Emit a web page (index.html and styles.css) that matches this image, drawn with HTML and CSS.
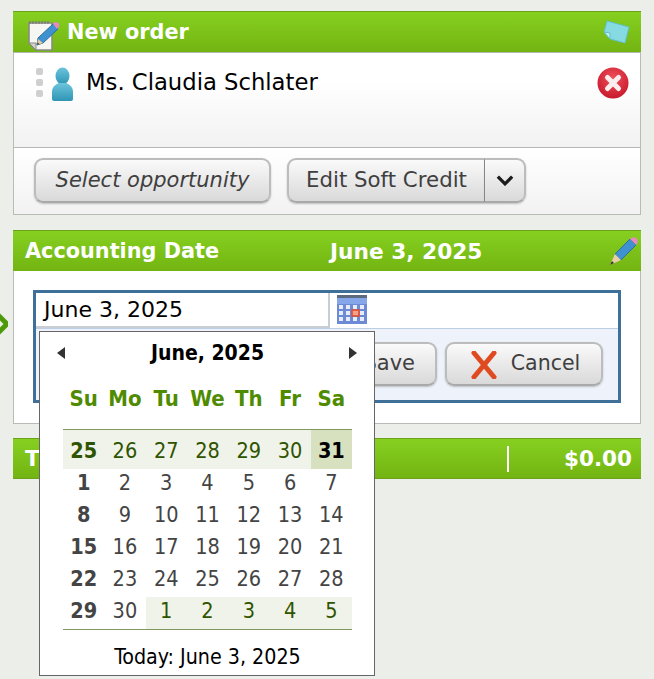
FILE: index.html
```html
<!DOCTYPE html>
<html lang="en">
<head>
<meta charset="utf-8">
<title>New order</title>
<link rel="stylesheet" href="styles.css">
</head>
<body>
<svg class="side-marker" width="8" height="26" viewBox="0 0 8 26"><path d="M-3 3 7 13-3 23" fill="none" stroke="#4c9a0a" stroke-width="5"/></svg>

<section class="panel panel-order">
  <header class="bar">
    <svg class="ico ico-note" width="34" height="34" viewBox="0 0 34 34">
      <path d="M3 6H26V33H10L3 26Z" fill="#f6f6f2" stroke="#8b8b86" stroke-width="1.6"/>
      <path d="M3 26H10V33Z" fill="#d2d2cc" stroke="#8b8b86"/>
      <path d="M4 4V7M7 4V7M10 4V7M13 4V7M16 4V7M19 4V7M22 4V7" stroke="#777" stroke-width="1.2"/>
      <path d="M12 21 27 7 32 12 17 26 11 28Z" fill="#3f92cf" stroke="#2a6f9f"/>
      <path d="M27 7 29 5 33 6 33 10 31 12Z" fill="#e48bc0"/>
      <path d="M12 22 11 28 17 26Z" fill="#e6c9a0"/>
      <path d="M11.500 25.500 11 28 13.500 27Z" fill="#333"/>
    </svg>
    <h2 class="bar-title">New order</h2>
    <svg class="ico ico-sticky" width="28" height="26" viewBox="0 0 28 26">
      <path d="M5 2 27 8 23 24 8 20 2 13Z" fill="#86dbe2" stroke="#5fbfc9"/>
      <path d="M2 13 8 14 8 20Z" fill="#c7eef0" stroke="#5fbfc9"/>
    </svg>
  </header>
  <div class="contact-row">
    <div class="grip"><i></i><i></i><i></i></div>
    <svg class="ico ico-person" width="23" height="34" viewBox="0 0 23 34">
      <defs><linearGradient id="pg" x1="0" y1="0" x2="0" y2="1"><stop offset="0" stop-color="#6cc4dc"/><stop offset="1" stop-color="#2f95b5"/></linearGradient></defs>
      <ellipse cx="11.500" cy="9" rx="7" ry="8.500" fill="url(#pg)"/>
      <path d="M8 16H15C20 18 22 21 22 25V32Q22 34 20 34H3Q1 34 1 32V25C1 21 3 18 8 16Z" fill="url(#pg)"/>
    </svg>
    <span class="contact-name">Ms. Claudia Schlater</span>
    <svg class="ico ico-remove" width="32" height="32" viewBox="0 0 32 32">
      <defs><radialGradient id="rg" cx=".5" cy=".35" r=".7"><stop offset="0" stop-color="#f0505a"/><stop offset="1" stop-color="#c4152a"/></radialGradient></defs>
      <circle cx="16" cy="16" r="15.500" fill="url(#rg)"/>
      <path d="M10.500 10.500 21.500 21.500M21.500 10.500 10.500 21.500" stroke="#fbeeee" stroke-width="5" stroke-linecap="round"/>
    </svg>
  </div>
  <div class="actions">
    <button class="btn btn-italic">Select opportunity</button>
    <div class="btn-split">
      <button class="btn btn-main">Edit Soft Credit</button>
      <button class="btn btn-caret"><svg width="18" height="11" viewBox="0 0 16 10"><path d="M1.500 1.500 8 8 14.500 1.500" fill="none" stroke="#1c1c1c" stroke-width="3"/></svg></button>
    </div>
  </div>
</section>

<section class="panel panel-date">
  <header class="bar bar-date">
    <h2 class="bar-title bar-title-sm">Accounting Date</h2>
    <span class="bar-value">June 3, 2025</span>
    <svg class="ico ico-pencil" width="30" height="30" viewBox="0 0 30 30">
      <path d="M7 18 22 3 28 9 13 24Z" fill="#3f92cf" stroke="#2a6f9f"/>
      <path d="M22 3 24 1.500Q27 .5 29 3T28 9Z" fill="#e48bc0"/>
      <path d="M7 18 13 24 2 29Z" fill="#e9cfa8"/>
      <path d="M4 25 6 27 2 29Z" fill="#333"/>
    </svg>
  </header>
  <div class="date-body">
    <div class="editor">
      <div class="editor-input">
        <div class="date-field">June 3, 2025</div>
        <svg class="ico ico-cal" width="30" height="29" viewBox="0 0 30 29">
          <rect width="30" height="29" fill="#6d8ad6"/>
          <rect width="30" height="3" fill="#5c6a80"/>
          <rect y="3" width="30" height="6" fill="#86a6ea"/>
          <g fill="#e6edf9">
            <rect x="2" y="10" width="4" height="4"/><rect x="9" y="10" width="4" height="4"/><rect x="16" y="10" width="4" height="4"/><rect x="23" y="10" width="4" height="4"/>
            <rect x="2" y="16" width="4" height="4"/><rect x="9" y="16" width="4" height="4"/><rect x="23" y="16" width="4" height="4"/>
            <rect x="2" y="22" width="4" height="4"/><rect x="9" y="22" width="4" height="4"/><rect x="16" y="22" width="4" height="4"/><rect x="23" y="22" width="4" height="4"/>
          </g>
          <rect x="15" y="15" width="7" height="6" fill="#f3a08a" stroke="#e2492a" stroke-width="1.500"/>
        </svg>
      </div>
      <div class="editor-actions">
        <button class="btn btn-save">Save</button>
        <button class="btn btn-cancel">
          <svg class="ico" width="26" height="28" viewBox="0 0 26 28"><path d="M3 2 23 26M23 2 3 26" stroke="#e04a20" stroke-width="5" stroke-linecap="round"/></svg>
          <span>Cancel</span>
        </button>
      </div>
    </div>
  </div>
</section>

<section class="panel-total">
  <span class="total-label">T</span>
  <span class="total-value">$0.00</span>
</section>

<div class="calendar">
  <div class="cal-head">
    <span class="cal-prev"></span>
    <span class="cal-title">June, 2025</span>
    <span class="cal-next"></span>
  </div>
  <div class="cal-grid cal-dow">
    <span>Su</span><span>Mo</span><span>Tu</span><span>We</span><span>Th</span><span>Fr</span><span>Sa</span>
  </div>
  <div class="cal-days">
    <div class="cal-grid cal-row-first">
      <span class="out sun">25</span><span class="out">26</span><span class="out">27</span><span class="out">28</span><span class="out">29</span><span class="out">30</span><span class="sel">31</span>
    </div>
    <div class="cal-grid cal-row"><span class="sun">1</span><span>2</span><span>3</span><span>4</span><span>5</span><span>6</span><span>7</span></div>
    <div class="cal-grid cal-row"><span class="sun">8</span><span>9</span><span>10</span><span>11</span><span>12</span><span>13</span><span>14</span></div>
    <div class="cal-grid cal-row"><span class="sun">15</span><span>16</span><span>17</span><span>18</span><span>19</span><span>20</span><span>21</span></div>
    <div class="cal-grid cal-row"><span class="sun">22</span><span>23</span><span>24</span><span>25</span><span>26</span><span>27</span><span>28</span></div>
    <div class="cal-grid cal-row"><span class="sun">29</span><span>30</span><span class="out">1</span><span class="out">2</span><span class="out">3</span><span class="out">4</span><span class="out">5</span></div>
  </div>
  <div class="cal-today">Today: June 3, 2025</div>
</div>
</body>
</html>
```
FILE: styles.css
```css
* { box-sizing: border-box; }
html, body { margin: 0; height: 100%; }
body {
  position: relative;
  background: #ecefe9;
  padding: 11px 13px 0;
  font-family: "DejaVu Sans", Verdana, sans-serif;
  overflow: hidden;
}
.ico { filter: blur(.4px); }
.side-marker { position: absolute; left: 0; top: 311px; }
.panel {
  background: #fff;
  border: 1px solid #b9bcb6;
  border-top: 0;
}
.panel-order { height: 204px; display: flex; flex-direction: column; margin-bottom: 15px; }
.panel-date { height: 194px; margin-bottom: 14px; }
.bar {
  height: 42px;
  margin: 0 -1px;
  display: flex;
  align-items: center;
  background: linear-gradient(#86d020, #73b412);
  border-top: 1px solid #6ca21a;
  border-bottom: 1px solid #b4b8b0;
  color: #fff;
  padding: 0 11px 0 13px;
}
.bar-title { margin: 0; font-size: 20.8px; font-weight: 700; line-height: 1; }
.ico-note { margin: 4px 7px 0 0; }
.ico-sticky { margin-left: auto; }
.contact-row {
  flex: 0 0 95px;
  display: flex;
  align-items: flex-start;
  padding: 14px 11px 0 22px;
  background: linear-gradient(#fff 30%, #f2f2f2);
  border-bottom: 1px solid #b5b8b2;
}
.grip { width: 15px; display: flex; flex-direction: column; gap: 4px; margin-top: 1px; }
.grip i { width: 7px; height: 7px; border-radius: 2px; background: #cfcfcf; }
.ico-person { margin-right: 12px; }
.contact-name { font-size: 22.7px; line-height: 30px; color: #000; }
.ico-remove { margin-left: auto; }
.actions {
  flex: 1;
  display: flex;
  gap: 16px;
  padding: 10px 20px 0;
  background: linear-gradient(#fff, #f2f2f2);
}
.btn {
  font: inherit;
  font-size: 21px;
  color: #3f3f3f;
  height: 45px;
  padding: 0 0 2px;
  border: 2px solid #bcbcbc;
  border-bottom-color: #a9a9a9;
  border-radius: 9px;
  background: linear-gradient(#fafafa, #d9d9d9);
  box-shadow: 0 1px 2px rgba(0,0,0,.22);
}
.btn-italic { width: 237px; font-style: italic; }
.btn-split { display: flex; }
.btn-main { width: 198px; font-size: 21.3px; border-right: 1px solid #8e8e8e; border-radius: 9px 0 0 9px; }
.btn-caret { width: 41px; border-left: 0; border-radius: 0 9px 9px 0; display: flex; align-items: center; justify-content: center; padding: 0; }
.bar-date { height: 41px; padding: 0 0 0 12px; border-bottom: 0; }
.bar-title-sm { width: 305px; flex: none; }
.bar-value { font-size: 21.7px; font-weight: 700; }
.ico-pencil { margin-left: auto; margin-right: 3px; }
.date-body { padding: 19px 19px 0; }
.editor { border: 3px solid #3f7099; height: 113px; width: 588px; background: #eef3fb; display: flex; flex-direction: column; }
.editor-input { height: 36px; background: #fff; border-bottom: 1px solid #bccfe2; display: flex; align-items: flex-start; flex: none; }
.date-field {
  width: 294px;
  height: 35px;
  border-right: 2px solid #c9ced4;
  border-bottom: 2px solid #c9ced4;
  padding-left: 8px;
  font-size: 22px;
  line-height: 33px;
  color: #000;
}
.ico-cal { margin: 2px 0 0 7px; }
.editor-actions { display: flex; justify-content: flex-end; gap: 8px; padding: 13px 15px 0 0; }
.btn-save { width: 120px; height: 44px; text-align: right; padding-right: 20px; }
.btn-cancel { width: 158px; height: 44px; font-size: 20.5px; padding-left: 3px; display: flex; align-items: center; justify-content: center; gap: 14px; }
.btn-cancel svg { margin-top: 3px; }
.panel-total {
  height: 41px;
  display: flex;
  justify-content: space-between;
  align-items: center;
  background: linear-gradient(#86d020, #73b412);
  border-top: 1px solid #6ca21a;
  border-bottom: 1px solid #6ca21a;
  color: #fff;
  font-size: 21.5px;
  font-weight: 700;
  padding: 0 9px 0 12px;
}
.total-value {
  border-left: 2px solid #fff;
  padding-left: 55px;
  line-height: 26px;
  height: 26px;
}
.calendar {
  position: absolute;
  left: 39px;
  top: 331px;
  width: 336px;
  height: 345px;
  background: #fff;
  border: 1px solid #666;
  padding: 0 22px 0 23px;
  font-stretch: condensed;
}
.cal-head { height: 42px; display: flex; align-items: center; justify-content: space-between; padding: 0 1px 0 0; margin: 0 -6px; }
.cal-title { font-size: 21px; font-weight: 700; color: #000; margin-left: 1px; }
.cal-prev, .cal-next { width: 0; height: 0; border-style: solid; border-width: 6px 0; border-top-color: transparent; border-bottom-color: transparent; }
.cal-prev { border-right: 8px solid #333; }
.cal-next { border-left: 8px solid #333; }
.cal-grid { display: grid; grid-template-columns: repeat(7, 1fr); text-align: center; }
.cal-dow { height: 55px; font-size: 22px; font-weight: 700; color: #4f8b00; line-height: 50px; }
.cal-days { border-top: 1px solid #83985c; border-bottom: 1px solid #83985c; }
.cal-row-first { height: 39px; grid-template-rows: 39px; }
.cal-row { height: 32px; grid-template-rows: 32px; }
.cal-days span { font-size: 21.5px; line-height: 28px; color: #444; }
.cal-days .cal-row-first span { line-height: 36px; padding-top: 3px; }
.cal-days .sun { font-weight: 700; }
.cal-days .out { background: #eff3e9; color: #2f5400; }
.cal-days .sel { background: #d7e1c0; color: #000; font-weight: 700; }
.cal-today { text-align: center; font-size: 21.25px; line-height: 26px; padding-top: 14px; color: #000; }
```
